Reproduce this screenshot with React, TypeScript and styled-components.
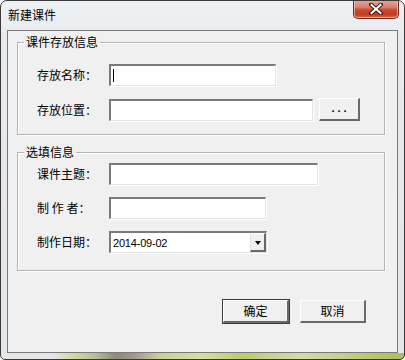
import React from "react";
import styled, { createGlobalStyle } from "styled-components";

const GlobalStyle = createGlobalStyle`
  html, body {
    margin: 0;
    padding: 0;
    background: #ffffff;
  }
  body {
    font-family: "Noto Sans CJK SC", "Liberation Sans", sans-serif;
    font-size: 12px;
    color: #000;
  }
`;

const Window = styled.div`
  box-sizing: border-box;
  width: 405px;
  height: 360px;
  border: 1px solid #3a3a3a;
  border-radius: 7px 7px 5px 5px;
  padding: 0 6px 6px 6px;
  display: flex;
  flex-direction: column;
  background:
    linear-gradient(
        to right,
        #e6e9ea 0%,
        #e4e8e6 50px,
        #cfd89a 75px,
        #b4bc9a 95px,
        #8e8a78 115px,
        #a89a90 135px,
        #c8d494 160px,
        #d8e09c 200px,
        #b8cc70 240px,
        #d4dca8 300px,
        #b8c870 370px,
        #a8bc60 405px
      )
      bottom / 100% 6px no-repeat,
    linear-gradient(to bottom, #eef1f4 0%, #e6eaee 40px, #e2e7ec 100%);
  overflow: hidden;
`;

const TitleBar = styled.div`
  height: 29px;
  display: flex;
  align-items: flex-start;
  justify-content: space-between;
`;

const Title = styled.span`
  margin-top: 6px;
  margin-left: 1px;
  font-size: 12px;
  line-height: 16px;
  color: #000;
`;

const CloseButton = styled.div`
  box-sizing: border-box;
  width: 46px;
  height: 19px;
  margin-top: -1px;
  margin-right: -1px;
  border: 1px solid #6e2a20;
  border-top: none;
  border-radius: 0 0 5px 5px;
  background: linear-gradient(
    to bottom,
    #e8a898 0%,
    #d88070 40%,
    #c84a30 55%,
    #c23c22 80%,
    #d86a48 100%
  );
  box-shadow: inset 0 0 0 1px rgba(255, 220, 210, 0.55);
  display: flex;
  align-items: center;
  justify-content: center;
`;

const Client = styled.div`
  flex: 1;
  box-sizing: border-box;
  border: 1px solid #787878;
  background: #f0f0f0;
  padding: 11px 11px 0 9px;
  display: flex;
  flex-direction: column;
`;

const Group = styled.div<{ $top: number; $bottom: number }>`
  position: relative;
  width: 368px;
  box-sizing: border-box;
  border: 1px solid #b4b4b4;
  box-shadow: inset 1px 1px 0 #ffffff, 1px 1px 0 #ffffff;
  padding: ${(p) => p.$top}px 0 ${(p) => p.$bottom}px 19px;
  display: flex;
  flex-direction: column;
  gap: 12px;
  & + & {
    margin-top: 17px;
  }
`;

// group caption sits over the frame line
const Legend = styled.span`
  position: absolute;
  top: -9px;
  left: 6px;
  padding: 0 2px;
  background: #f0f0f0;
  font-size: 12px;
  line-height: 16px;
`;

const Row = styled.div`
  display: flex;
  align-items: center;
  gap: 6px;
`;

const Label = styled.span`
  width: 66px;
  font-size: 12px;
  line-height: 16px;
  white-space: pre;
`;

const Field = styled.div<{ $width: number }>`
  box-sizing: border-box;
  width: ${(p) => p.$width}px;
  height: 22px;
  background: #ffffff;
  border-style: solid;
  border-width: 2px 1px 1px 2px;
  border-color: #7a7a7a #e3e3e3 #e3e3e3 #7a7a7a;
  box-shadow: 1px 1px 0 #ffffff;
  display: flex;
  align-items: center;
  padding-left: 2px;
`;

const Caret = styled.span`
  display: block;
  width: 1px;
  height: 13px;
  background: #000;
`;

const DateText = styled.span`
  flex: 1;
  font-family: "Liberation Sans", Arial, sans-serif;
  font-size: 11px;
  letter-spacing: -0.2px;
  color: #000;
`;

const DropButton = styled.div`
  box-sizing: border-box;
  width: 16px;
  height: 19px;
  background: #f0f0f0;
  border-style: solid;
  border-width: 1px 2px 2px 1px;
  border-color: #ffffff #6a6a6a #6a6a6a #e3e3e3;
  display: flex;
  align-items: center;
  justify-content: center;
`;

const Arrow = styled.span`
  width: 0;
  height: 0;
  border-left: 3.5px solid transparent;
  border-right: 3.5px solid transparent;
  border-top: 4px solid #000;
  margin-top: 2px;
`;

const Button = styled.button<{ $default?: boolean; $width?: number }>`
  box-sizing: border-box;
  width: ${(p) => p.$width ?? 66}px;
  height: 23px;
  margin: 0;
  padding: 0;
  background: #f0f0f0;
  font-family: "Noto Sans CJK SC", "Liberation Sans", sans-serif;
  font-size: 12px;
  line-height: 16px;
  color: #000;
  border-style: solid;
  border-width: 1px 2px 2px 1px;
  border-color: #ffffff #696969 #696969 #ffffff;
  outline: ${(p) => (p.$default ? "1px solid #3c3c3c" : "none")};
  outline-offset: 0;
  display: flex;
  align-items: center;
  justify-content: center;
`;

const Dots = styled.span`
  font-family: "Liberation Sans", Arial, sans-serif;
  font-size: 11px;
  font-weight: bold;
  letter-spacing: 3px;
  margin-left: 3px;
  margin-top: -2px;
`;

const ButtonRow = styled.div`
  display: flex;
  justify-content: flex-end;
  gap: 11px;
  margin-top: 29px;
  margin-right: 20px;
`;

const CloseIcon = () => (
  <svg width="14" height="12" viewBox="0 0 14 12">
    <path
      d="M2 1.5 L12 10.5 M12 1.5 L2 10.5"
      stroke="#4a1a14"
      strokeWidth="4"
      strokeLinecap="square"
    />
    <path
      d="M2.5 2 L11.5 10 M11.5 2 L2.5 10"
      stroke="#ffffff"
      strokeWidth="2"
      strokeLinecap="square"
    />
  </svg>
);

export default function App() {
  return (
    <>
      <GlobalStyle />
      <Window>
        <TitleBar>
          <Title>新建课件</Title>
          <CloseButton>
            <CloseIcon />
          </CloseButton>
        </TitleBar>
        <Client>
          <Group $top={21} $bottom={13}>
            <Legend>课件存放信息</Legend>
            <Row>
              <Label>存放名称：</Label>
              <Field $width={167}>
                <Caret />
              </Field>
            </Row>
            <Row>
              <Label>存放位置：</Label>
              <Field $width={204} />
              <Button $width={41}>
                <Dots>...</Dots>
              </Button>
            </Row>
          </Group>
          <Group $top={10} $bottom={17}>
            <Legend>选填信息</Legend>
            <Row>
              <Label>课件主题：</Label>
              <Field $width={209} />
            </Row>
            <Row>
              <Label>制 作 者：</Label>
              <Field $width={157} />
            </Row>
            <Row>
              <Label>制作日期：</Label>
              <Field $width={158}>
                <DateText>2014-09-02</DateText>
                <DropButton>
                  <Arrow />
                </DropButton>
              </Field>
            </Row>
          </Group>
          <ButtonRow>
            <Button $default>确定</Button>
            <Button>取消</Button>
          </ButtonRow>
        </Client>
      </Window>
    </>
  );
}
